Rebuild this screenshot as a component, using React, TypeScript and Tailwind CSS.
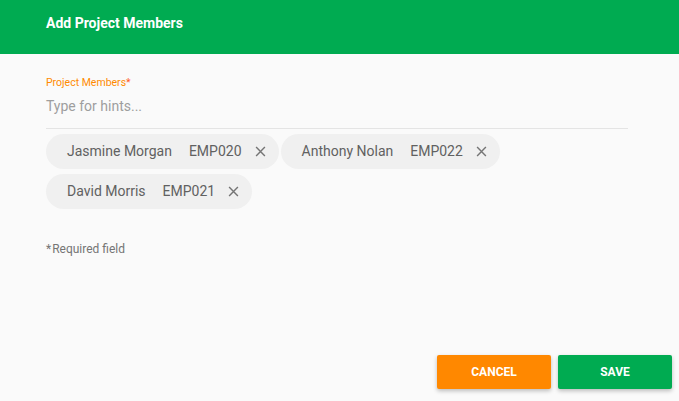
import React from 'react';

// Dialog for adding members to a project

interface Member {
  name: string;
  code: string;
}

const members: Member[] = [
  { name: 'Jasmine Morgan', code: 'EMP020' },
  { name: 'Anthony Nolan', code: 'EMP022' },
  { name: 'David Morris', code: 'EMP021' },
];

function Chip({ member }: { member: Member }) {
  return (
    <div className="flex items-center h-[35px] rounded-full bg-[#f0f0f0] pl-[21px] pr-[13px] text-[14px] text-[#616161]">
      <span>{member.name}</span>
      <span className="ml-[17px]">{member.code}</span>
      <svg className="ml-[13px]" width="11" height="11" viewBox="0 0 10 10">
        <path d="M1 1 L9 9 M9 1 L1 9" stroke="#757575" strokeWidth="1.3" />
      </svg>
    </div>
  );
}

export default function App() {
  return (
    <div className="w-[679px] h-[401px] bg-[#fafafa] flex flex-col" style={{ fontFamily: 'Roboto, sans-serif' }}>
      <div className="h-[54px] bg-[#00ab51] flex items-start pt-[14px] px-[46px] shrink-0">
        <h1 className="text-white font-bold text-[14px] leading-[18px]">Add Project Members</h1>
      </div>
      <div className="flex-1 flex flex-col px-[46px] pt-[22px]">
        <div className="w-[582px]">
          <label className="block text-[10.5px] text-[#ff8a00] leading-[14px]">
            Project Members<span className="text-[#ff5a1f]">*</span>
          </label>
          <div className="mt-[7px] pb-[13px] border-b border-[#e4e4e4] text-[14px] text-[#9e9e9e] leading-[18px]">
            Type for hints...
          </div>
          <div className="flex flex-wrap gap-x-[2px] gap-y-[5px] mt-[5px]">
            {members.map(m => (
              <Chip key={m.code} member={m} />
            ))}
          </div>
          <div className="mt-[31px] text-[12px] text-[#757575]">
            <span className="mr-[1px]">*</span>Required field
          </div>
        </div>
        <div className="mt-auto mb-[12px] flex justify-end gap-[7px] -mr-[39px]">
          <button className="w-[114px] h-[34px] bg-[#ff8800] text-white text-[12px] font-bold rounded-[2px] shadow-[0_2px_4px_rgba(0,0,0,0.25)]">
            CANCEL
          </button>
          <button className="w-[114px] h-[34px] bg-[#00ab51] text-white text-[12px] font-bold rounded-[2px] shadow-[0_2px_4px_rgba(0,0,0,0.25)]">
            SAVE
          </button>
        </div>
      </div>
    </div>
  );
}
